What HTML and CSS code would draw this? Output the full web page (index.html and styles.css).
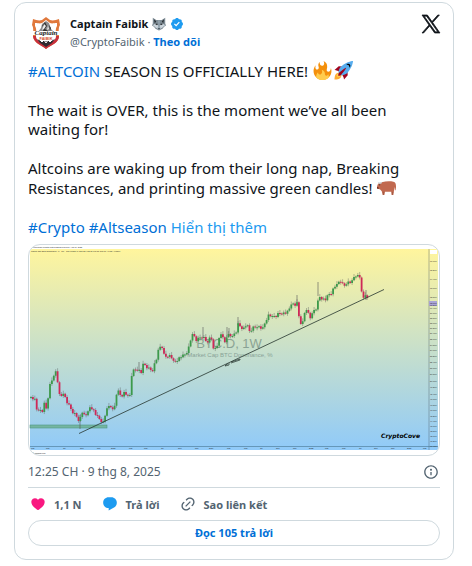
FILE: index.html
```
<!DOCTYPE html>
<html lang="vi">
<head>
  <meta charset="UTF-8">
  <meta name="viewport" content="width=device-width, initial-scale=1.0">
  <title>Captain Faibik - Altcoin season</title>
  <link rel="stylesheet" href="styles.css">
</head>
<body>
  <article class="tweet">
    <!-- header -->
    <header class="tweet-header">
      <a class="avatar" href="#" aria-label="Captain Faibik">
        <svg viewBox="0 0 36 36">
          <path d="M18 2l4 3c3 1 6 0 9-1l1 6c-2 3-1 8-1 12-1 6-8 8-13 12C13 30 6 28 5 22c0-4 1-9-1-12l1-6c3 1 6 2 9 1z" fill="#e0783c"/>
          <path d="M5 21h26c0 7-8 9-13 13C13 30 6 28 5 21z" fill="#c9303c"/>
          <path d="M18 5l4 3c2 1 4 0 7 0v3c-2 3-1 8-1 11-1 4-6 6-10 9-4-3-9-5-10-9 0-3 1-8-1-11V8c3 0 5 1 7 0z" fill="#fff"/>
          <path d="M18 6l3 2 2 6 3 3H10l3-4 1-4z" fill="#8b8b8d"/>
          <path d="M17 7l2 4-2 3 3 2h-5l1-4-2-1zM21 10l2 3-1 3z" fill="#333"/>
          <path d="M16 9l2 2-2 3-2 1zM20 11l1 3-2 1z" fill="#eee"/>
          <path d="M9 24l4 2h10l4-2-3 4-6 4-6-4z" fill="#302b30"/>
          <path d="M12 25l2 2 2-2 2 3 2-3 2 2 2-2" fill="none" stroke="#fff"/>
          <path d="M3 16h30v4H3z" fill="#fff"/>
          <text x="18" y="20" class="avatar-name">Captain</text>
          <text x="18" y="25" class="avatar-sub">FAIBIK</text>
        </svg>
      </a>
      <div class="author">
        <div class="author-name">
          <a href="#">Captain Faibik</a>
          <svg class="wolf" viewBox="0 0 36 36" role="img" aria-label="wolf">
            <path d="M2 2l9 6h14l9-6v15l2 5-5 3-4 5-9 5-9-5-4-5-5-3 2-5z" fill="#7d8b94"/>
            <path d="M5 6l6 5-4 6zM31 6l-6 5 4 6z" fill="#292f33"/>
            <path d="M2 21l8-5 6 6v9l-7-4-4-4zM34 21l-8-5-6 6v9l7-4 4-4z" fill="#ccd6dd"/>
            <path d="M16 9h4l-1 11 3 9-4 5-4-5 3-9z" fill="#99aab5"/>
            <path d="M9 16l6 2-2 3-4-2zM27 16l-6 2 2 3 4-2zM15 29h6l-3 3z" fill="#292f33"/>
          </svg>
          <svg class="verified" viewBox="0 0 24 24" role="img" aria-label="verified">
            <path d="M22.25 12c0-1.43-.88-2.67-2.19-3.34.46-1.39.2-2.9-.81-3.91s-2.52-1.27-3.91-.81c-.66-1.31-1.91-2.19-3.34-2.19s-2.67.88-3.33 2.19c-1.4-.46-2.91-.2-3.92.81s-1.26 2.52-.8 3.91c-1.31.67-2.2 1.91-2.2 3.34s.89 2.67 2.2 3.34c-.46 1.39-.21 2.9.8 3.91s2.52 1.26 3.91.81c.67 1.31 1.91 2.19 3.34 2.19s2.68-.88 3.34-2.19c1.39.45 2.9.2 3.91-.81s1.27-2.52.81-3.91c1.31-.67 2.19-1.91 2.19-3.34zm-11.71 4.2L6.8 12.46l1.41-1.42 2.26 2.26 4.8-5.23 1.47 1.36-6.2 6.77z"/>
          </svg>
        </div>
        <div class="author-handle">
          <a class="handle" href="#">@CryptoFaibik</a> · <a class="follow" href="#">Theo dõi</a>
        </div>
      </div>
      <a class="x-logo" href="#" aria-label="X">
        <svg viewBox="0 0 24 24">
          <path d="M14.258 10.152L23.176 0h-2.113l-7.747 8.813L7.133 0H0l9.352 13.328L0 23.973h2.113l8.176-9.309 6.531 9.309h7.133zm-2.895 3.293l-.949-1.328L2.875 1.56h3.246l6.086 8.523.945 1.328 7.91 11.078h-3.246z"/>
        </svg>
      </a>
    </header>

    <!-- text -->
    <div class="tweet-text">
      <p><a href="#">#ALTCOIN</a> SEASON IS OFFICIALLY HERE!
        <svg class="emoji" viewBox="0 0 36 36" role="img" aria-label="fire">
          <path fill="#f4900c" d="M35 19c0-2.062-.367-4.039-1.04-5.868-.46 5.389-3.333 8.157-6.335 6.868-2.812-1.208-.917-5.917-.777-8.164.236-3.809-.012-8.169-6.931-11.794 2.875 5.5.333 8.917-2.333 9.125-2.958.231-5.667-2.542-4.667-7.042-3.238 2.386-3.332 6.402-2.333 9 1.042 2.708-.042 4.958-2.583 5.208-2.84.28-4.418-3.041-2.963-8.333C2.52 10.965 1 14.805 1 19c0 9.389 7.611 17 17 17s17-7.611 17-17z"/>
          <path fill="#ffcc4d" d="M28.394 23.999c.148 3.084-2.561 4.293-4.019 3.709-2.106-.843-1.541-2.291-2.083-5.291s-2.625-5.083-5.708-6c2.25 6.333-1.247 8.667-3.08 9.084-1.872.426-3.753-.001-3.968-4.007C7.352 23.668 6 26.676 6 30c0 .368.023.73.055 1.09C9.125 34.124 13.342 36 18 36s8.875-1.876 11.945-4.91c.032-.36.055-.722.055-1.09 0-2.187-.584-4.236-1.606-6.001z"/>
        </svg><svg class="emoji" viewBox="0 0 36 36" role="img" aria-label="rocket">
          <path fill="#a0041e" d="M1 17l8-7 16 1 1 16-7 8s.001-5.999-6-12-12-6-12-6z"/>
          <path fill="#ffac33" d="M.973 35s-.036-7.979 2.985-11S15 21.187 15 21.187 14.999 29 11.999 32c-3 3-11.026 3-11.026 3z"/>
          <circle fill="#ffcc4d" cx="9" cy="27" r="4"/>
          <path fill="#55acee" d="M35.999 0s-10 0-22 10c-6 5-6 14-4 16s11 2 16-4c10-12 10-22 10-22z"/>
          <path d="M26.999 5c-1.623 0-3.013.971-3.641 2.36.502-.227 1.055-.36 1.641-.36 2.209 0 4 1.791 4 4 0 .586-.133 1.139-.359 1.64 1.389-.627 2.359-2.017 2.359-3.64 0-2.209-1.791-4-4-4z"/>
          <path fill="#a0041e" d="M8 28s0-4 1-5 13.001-10.999 14-10-9.001 13-10.001 14S8 28 8 28z"/>
        </svg></p>
      <p>The wait is OVER, this is the moment we’ve all been waiting for!</p>
      <p>Altcoins are waking up from their long nap, Breaking Resistances, and printing massive green candles!
        <svg class="emoji" viewBox="0 0 36 36" role="img" aria-label="ox">
          <path fill="#c1694f" d="M9 8c7-2 16-2 22-1 4 1 5 4 5 9v7h-1l-1-6-2 8-1 7h-3l-1-6H15l-1 6h-3l-2-7-3-3-5-2-1-4 2-5z"/>
          <path fill="#a65a43" d="M28 26h3l-1 6h-2zM11 26h3l-1 6h-2z"/>
          <path fill="#ccd6dd" d="M1 7c3 2 6 2 9 0l-2 4H4z"/>
          <circle fill="#292f33" cx="5" cy="13" r="1"/>
          <path fill="#662113" d="M0 17l3 1v3l-3-1z"/>
        </svg></p>
      <p><a href="#">#Crypto</a> <a href="#">#Altseason</a> <a class="show-more" href="#">Hiển thị thêm</a></p>
    </div>

    <!-- chart -->
    <a class="media" href="#" aria-label="BTC.D chart">
      <svg class="chart" viewBox="29 245 410 210">
        <defs>
          <linearGradient id="sky" x1="0" y1="0" x2="0" y2="1">
            <stop offset="0" stop-color="#fff59d"/>
            <stop offset="1" stop-color="#90caf9"/>
          </linearGradient>
        </defs>
        <rect x="30" y="249" width="408" height="201" fill="url(#sky)"/>
        <rect x="428" y="249" width="2" height="201" fill="#456" opacity=".2"/>
        <rect x="430" y="250" width="7" height="4" fill="#fff"/>
        <rect x="429" y="301" width="8" height="5" fill="#a9a4d6"/>
        <path d="M30 446.5H438" stroke="#47748f" stroke-width=".6"/>
        <text class="tiny" x="31" y="248">CryptoFaibik created with TradingView.com, Aug 09, 2025</text>
        <text class="tiny" x="31" y="252">Market Cap BTC Dominance, % · 1W · CRYPTOCAP  O61.23  H62.31  L60.89  C61.10  −0.52 (−0.85%)</text>
        <text class="watermark" x="229" y="348">BTC.D, 1W</text>
        <text class="watermark-sub" x="230" y="357">Market Cap BTC Dominance, %</text>
        <rect x="30" y="425" width="77" height="3" fill="#74b5a2" stroke="#4d9683" stroke-width=".6"/>
        <g id="candles"></g>
        <path d="M79 433.500L384 289.500" stroke="#26352f" stroke-width=".8"/>
        <path d="M225 366l4-1m-4 1l2-2 3 0m1-1l9-3v-1l-9 3" fill="none" stroke="#26352f" stroke-width=".7"/>
        <g id="axis"></g>
        <text class="signature" x="381" y="438">CryptoCove</text>
        <text class="tiny" x="32" y="454">◥ TradingView</text>
      </svg>
    </a>

    <!-- date -->
    <div class="tweet-date">
      <a href="#">12:25 CH · 9 thg 8, 2025</a>
      <a class="info" href="#" aria-label="info">
        <svg viewBox="0 0 24 24"><path d="M13.5 8.5c0 .83-.67 1.5-1.5 1.5s-1.5-.67-1.5-1.5S11.17 7 12 7s1.5.67 1.5 1.5zM13 17v-5h-2v5h2zm-1 5.25c5.66 0 10.25-4.59 10.25-10.25S17.66 1.75 12 1.75 1.75 6.34 1.75 12 6.34 22.25 12 22.25zM20.25 12c0 4.56-3.69 8.25-8.25 8.25S3.75 16.56 3.75 12 7.44 3.75 12 3.75s8.25 3.69 8.25 8.25z"/></svg>
      </a>
    </div>

    <!-- actions -->
    <div class="actions">
      <button class="action like" type="button">
        <svg viewBox="0 0 24 24"><path d="M20.884 13.19c-1.351 2.48-4.001 5.12-8.379 7.67l-.503.3-.504-.3c-4.379-2.55-7.029-5.19-8.382-7.67-1.36-2.5-1.41-4.86-.514-6.67.887-1.79 2.647-2.91 4.601-3.01 1.651-.09 3.368.56 4.798 2.01 1.429-1.45 3.146-2.1 4.796-2.01 1.954.1 3.714 1.22 4.601 3.01.896 1.81.846 4.17-.514 6.67z"/></svg>
        <span>1,1 N</span>
      </button>
      <button class="action reply" type="button">
        <svg viewBox="0 0 24 24"><path d="M1.751 10c0-4.42 3.584-8 8.005-8h4.366c4.49 0 8.129 3.64 8.129 8.13 0 2.96-1.607 5.68-4.196 7.11l-8.054 4.46v-3.69h-.067c-4.49.1-8.183-3.51-8.183-8.01z"/></svg>
        <span>Trả lời</span>
      </button>
      <button class="action copy" type="button">
        <svg viewBox="0 0 24 24"><path d="M18.36 5.64c-1.95-1.96-5.11-1.96-7.07 0L9.88 7.05 8.46 5.64l1.42-1.42c2.73-2.73 7.16-2.73 9.9 0 2.73 2.74 2.73 7.17 0 9.9l-1.42 1.42-1.41-1.42 1.41-1.41c1.96-1.96 1.96-5.12 0-7.07zm-2.12 3.53l-7.07 7.07-1.41-1.41 7.07-7.07 1.41 1.41zm-12.02.71l1.42-1.42 1.41 1.42-1.41 1.41c-1.96 1.96-1.96 5.12 0 7.07 1.95 1.96 5.11 1.96 7.07 0l1.41-1.41 1.42 1.41-1.42 1.42c-2.73 2.73-7.16 2.73-9.9 0-2.73-2.74-2.73-7.17 0-9.9z"/></svg>
        <span>Sao liên kết</span>
      </button>
    </div>
    <a class="read-replies" href="#">Đọc 105 trả lời</a>
  </article>
  <script src="chart.js"></script>
</body>
</html>
```

FILE: styles.css
```
* {
  box-sizing: border-box;
}
body {
  margin: 0;
  padding: 2px 18px 6px 14px;
  background: #fff;
  color: #0f1419;
  font-family: "Noto Sans", "Open Sans", sans-serif;
}
a {
  color: #006fd6;
  text-decoration: none;
}
svg {
  display: block;
}
.tweet {
  max-width: 550px;
  padding: 12px 13px 13px;
  border: 1px solid #cfd9de;
  border-radius: 12px;
}

/* header */
.tweet-header {
  display: flex;
  align-items: flex-start;
}
.avatar {
  width: 36px;
  margin-right: 6px;
}
.avatar-name {
  font: italic bold 7px "Liberation Serif", serif;
  text-anchor: middle;
  fill: #222;
}
.avatar-sub {
  font: bold 4px "Liberation Sans", sans-serif;
  text-anchor: middle;
  fill: #d8502f;
}
.author {
  flex: 1;
  font-size: 11px;
  line-height: 18px;
}
.author-name {
  display: flex;
  align-items: center;
  gap: 4px;
}
.author-name a {
  color: #0f1419;
  font-weight: 700;
}
.wolf {
  width: 14px;
}
.verified {
  width: 14px;
  fill: #1d9bf0;
}
.author-handle,
.author-handle .handle {
  color: #536471;
}
.follow {
  font-weight: 700;
}
.x-logo {
  width: 18px;
}
.x-logo svg {
  overflow: visible;
  fill: #0f1419;
  stroke: #0f1419;
}

/* text */
.tweet-text {
  padding: 10px 0 7px;
  font-size: 15px;
  line-height: 19px;
}
.tweet-text p {
  margin: 0 0 20px;
}
.tweet-text p:last-child {
  margin: 0;
}
.tweet-text .show-more {
  color: #1d9bf0;
}
.emoji {
  display: inline-block;
  width: 19px;
  height: 19px;
  margin: 0 1px;
  vertical-align: -3px;
}

/* chart */
.media {
  display: block;
  overflow: hidden;
  border: 1px solid #cfd9de;
  border-radius: 12px;
}
.chart {
  width: 100%;
}
.tiny {
  font: 2px "Liberation Sans", sans-serif;
  fill: #222;
}
.watermark {
  font: 13px "Liberation Sans", sans-serif;
  text-anchor: middle;
  fill: #4b6660;
  opacity: .5;
}
.watermark-sub {
  font: 6px "Liberation Sans", sans-serif;
  text-anchor: middle;
  fill: #4b6660;
  opacity: .5;
}
.signature {
  font: italic bold 6px "DejaVu Sans", sans-serif;
  fill: #000;
}

/* date */
.tweet-date {
  display: flex;
  align-items: center;
  justify-content: space-between;
  height: 32px;
  border-bottom: 1px solid #cfd9de;
  font-size: 12px;
}
.tweet-date a {
  color: #536471;
}
.info svg {
  width: 16px;
  margin-right: 1px;
  fill: #536471;
}

/* actions */
.actions {
  display: flex;
  gap: 18px;
  padding: 7px 0;
}
.action {
  display: flex;
  align-items: center;
  gap: 8px;
  height: 18px;
  padding: 0 0 0 2px;
  border: 0;
  background: none;
  color: #536471;
  font: 700 11px "Noto Sans", sans-serif;
}
.action svg {
  width: 16px;
  fill: #536471;
}
.like svg {
  fill: #f91880;
}
.reply svg {
  fill: #1d9bf0;
}
.read-replies {
  display: block;
  border: 1px solid #cfd9de;
  border-radius: 13px;
  font-size: 11px;
  font-weight: 700;
  line-height: 24px;
  text-align: center;
}
```

FILE: chart.js
```
const NS = 'http://www.w3.org/2000/svg';
const candles = document.getElementById('candles');
const axis = document.getElementById('axis');

// price line, [x, y]
const price = [
  [31, 397], [35, 400], [37, 410], [43, 411], [44, 403], [47, 410], [49, 388], [52, 379], [54, 376],
  [57, 368], [58, 390], [60, 397], [63, 393], [67, 402], [70, 407], [73, 413], [77, 416], [79, 423],
  [82, 411], [85, 417], [88, 411], [90, 408], [93, 408], [95, 416], [97, 413], [99, 420], [103, 422],
  [105, 417], [107, 407], [112, 407], [114, 412], [116, 395], [118, 390], [121, 397], [124, 393],
  [130, 396], [132, 371], [137, 369], [141, 373], [143, 364], [148, 368], [153, 371], [155, 362],
  [157, 357], [159, 347], [163, 347], [164, 355], [168, 357], [171, 355], [173, 362], [178, 360],
  [182, 355], [185, 355], [188, 350], [190, 343], [192, 333], [196, 340], [199, 338], [202, 337],
  [205, 339], [208, 343], [211, 334], [213, 350], [217, 346], [221, 333], [225, 343], [227, 335],
  [233, 336], [236, 332], [238, 324], [241, 327], [243, 330], [247, 323], [249, 332], [254, 327],
  [258, 327], [263, 328], [267, 318], [269, 315], [275, 317], [279, 313], [283, 314], [287, 312],
  [290, 308], [292, 301], [294, 307], [297, 302], [299, 318], [302, 326], [304, 315], [306, 308],
  [308, 313], [310, 318], [313, 312], [317, 307], [319, 295], [321, 299], [325, 300], [328, 295],
  [332, 293], [334, 287], [337, 284], [342, 280], [343, 287], [347, 283], [350, 282], [353, 280],
  [355, 275], [360, 277], [361, 281], [362, 298], [364, 299], [366, 292], [368, 302]
];
// long wicks, [x, top, bottom]
const wicks = [
  [80, 415, 429], [203, 327, 338], [227, 327, 337], [229, 328, 336], [238, 317, 325],
  [297, 295, 303], [318, 282, 296], [139, 362, 370], [366, 290, 300]
];

function line(x, y1, y2, color, width) {
  const el = document.createElementNS(NS, 'path');
  el.setAttribute('d', `M${x} ${y1}V${y2}`);
  el.setAttribute('stroke', color);
  el.setAttribute('stroke-width', width);
  candles.appendChild(el);
}

function label(x, y, text) {
  const el = document.createElementNS(NS, 'text');
  el.setAttribute('x', x);
  el.setAttribute('y', y);
  el.setAttribute('class', 'tiny');
  el.textContent = text;
  axis.appendChild(el);
}

function priceAt(x) {
  const i = Math.max(1, price.findIndex(p => p[0] >= x));
  const [x1, y1] = price[i - 1];
  const [x2, y2] = price[i];
  return y1 + (y2 - y1) * (x - x1) / (x2 - x1);
}

wicks.forEach(w => line(w[0], w[1], w[2], '#555', 0.6));

// one candle a week
const step = 1.9;
let open = 398;
let n = 0;
for (let x = 31; x <= 368; x += step) {
  const close = priceAt(x) + Math.sin(n * 2.4) * 1.2;
  const top = Math.min(open, close);
  const bottom = Math.max(open, close, top + 1);
  line(x, top - 1 - n % 3, bottom + 1 + n % 2, '#555', 0.4);
  line(x, top, bottom, close < open ? '#3c9a4b' : '#cf2858', 1.8);
  open = close;
  n++;
}

[261, 270, 279, 288, 297, 303, 305, 308, 313, 318, 323, 328, 333, 339, 345, 350, 356, 362, 368, 374,
  381, 387, 394, 399, 405, 410, 416, 421, 426, 431, 436, 441, 446].forEach((y, i) => {
  label(430, y + 1, `${(66 - i * 0.8).toFixed(2)}%`);
});
[[31, 'Mar'], [46, 'May'], [63, 'Jul'], [80, 'Sep'], [97, 'Nov'], [111, '2023'], [129, 'Mar'],
  [144, 'May'], [161, 'Jul'], [178, 'Sep'], [195, 'Nov'], [209, '2024'], [227, 'Mar'], [244, 'May'],
  [260, 'Jul'], [276, 'Sep'], [293, 'Nov'], [309, '2025'], [325, 'Mar'], [342, 'May'], [359, 'Jul'],
  [374, 'Sep'], [391, 'Nov'], [407, '2026'], [423, 'Mar']].forEach(m => label(m[0], 449, m[1]));
```
